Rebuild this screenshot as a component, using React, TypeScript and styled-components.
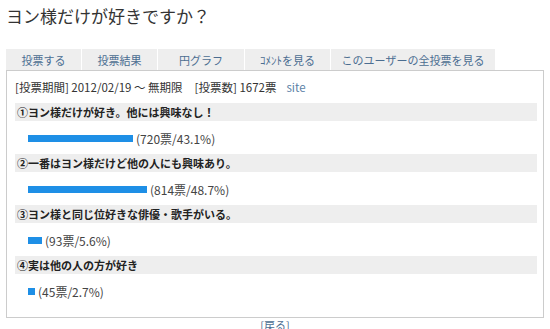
import React from "react";
import styled, { createGlobalStyle } from "styled-components";

const Global = createGlobalStyle`
  html, body { margin: 0; padding: 0; background: #fff; }
  body { font-family: "Noto Sans CJK JP", "DejaVu Sans", sans-serif; color: #333; }
`;

const Page = styled.div`
  padding: 0 6px;
  width: 538px;
`;

const Title = styled.h1`
  margin: 0;
  padding-top: 5px;
  font-size: 17px;
  line-height: 22px;
  font-weight: normal;
  color: #333;
  height: 44px;
  box-sizing: content-box;
`;

const Tabs = styled.div`
  display: flex;
  height: 21px;
`;

const Tab = styled.a<{ $w: number }>`
  display: flex;
  align-items: center;
  justify-content: center;
  width: ${(p) => p.$w}px;
  height: 21px;
  background: #eeeeee;
  border-right: 1px solid #fff;
  font-size: 11px;
  color: #4b6d91;
  text-decoration: none;
  box-sizing: border-box;
`;

const Panel = styled.div`
  border: 1px solid #cccccc;
  padding: 0 6px 10px 8px;
  box-sizing: border-box;
  width: 538px;
`;

const Info = styled.div`
  font-size: 11.5px;
  line-height: 16px;
  padding: 8px 0 8px 0;
  color: #333;
`;

const Label = styled.span`
  margin-right: 12px;
`;

const Site = styled.a`
  color: #5b7fa6;
  text-decoration: none;
  margin-left: 10px;
`;

const Question = styled.div`
  background: #eeeeee;
  height: 18px;
  line-height: 18px;
  font-size: 11px;
  font-weight: bold;
  padding-left: 2px;
  color: #222;
`;

const Answer = styled.div`
  display: flex;
  align-items: center;
  height: 33px;
  padding-left: 13px;
  padding-top: 2px;
  box-sizing: border-box;
`;

const Bar = styled.div`
  height: 7px;
  background: #1e8fe6;
`;

const Count = styled.span`
  font-size: 12px;
  margin-left: 3px;
  color: #444;
`;

const Footer = styled.div`
  text-align: center;
  font-size: 11px;
  line-height: 13px;
  padding-top: 1px;
`;

const Back = styled.a`
  color: #4b6d91;
  text-decoration: none;
`;

const tabs: [string, number][] = [
  ["投票する", 76],
  ["投票結果", 76],
  ["円グラフ", 87],
  ["ｺﾒﾝﾄを見る", 86],
  ["このユーザーの全投票を見る", 165],
];

const items = [
  { q: "①ヨン様だけが好き。他には興味なし！", n: 720, p: 43.1 },
  { q: "②一番はヨン様だけど他の人にも興味あり。", n: 814, p: 48.7 },
  { q: "③ヨン様と同じ位好きな俳優・歌手がいる。", n: 93, p: 5.6 },
  { q: "④実は他の人の方が好き", n: 45, p: 2.7 },
];

export default function App() {
  return (
    <>
      <Global />
      <Page>
        <Title>ヨン様だけが好きですか？</Title>
        <Tabs>
          {tabs.map(([t, w]) => (
            <Tab key={t} $w={w} href="#">
              {t}
            </Tab>
          ))}
        </Tabs>
        <Panel>
          <Info>
            <Label>[投票期間] 2012/02/19 ～ 無期限</Label>
            [投票数] 1672票
            <Site href="#">site</Site>
          </Info>
          {items.map((it) => (
            <div key={it.q}>
              <Question>{it.q}</Question>
              <Answer>
                <Bar style={{ width: `${Math.round(it.p * 2.44)}px` }} />
                <Count>
                  ({it.n}票/{it.p}%)
                </Count>
              </Answer>
            </div>
          ))}
        </Panel>
        <Footer>
          <Back href="#">[戻る]</Back>
        </Footer>
      </Page>
    </>
  );
}
